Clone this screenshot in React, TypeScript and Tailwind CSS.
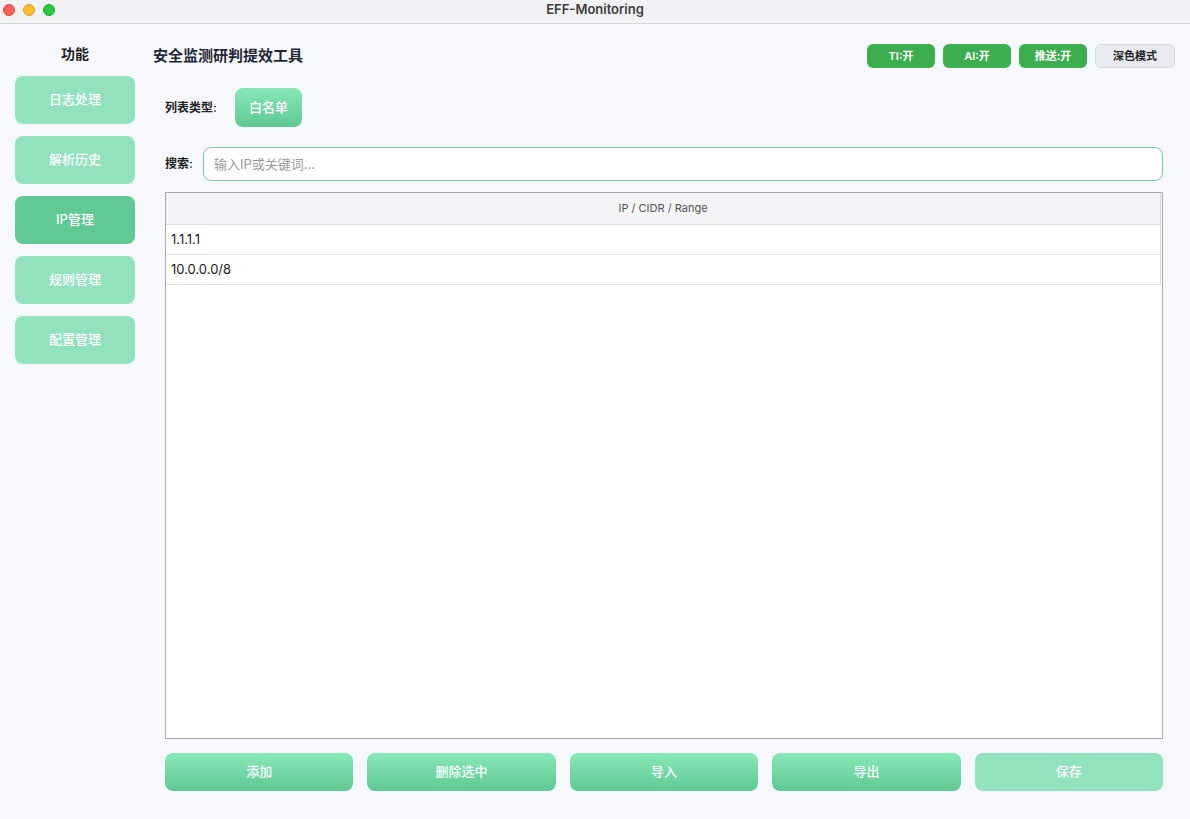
import React, { useState } from 'react';

const font = { fontFamily: '"Inter", "Noto Sans CJK SC", sans-serif' };

const navItems = ['日志处理', '解析历史', 'IP管理', '规则管理', '配置管理'];

export default function App() {
  const [active, setActive] = useState('IP管理');
  const [query, setQuery] = useState('');
  const rows = ['1.1.1.1', '10.0.0.0/8'];

  return (
    <div className="w-[1190px] h-[819px] flex flex-col bg-[#f7f8fc] overflow-hidden" style={font}>
      {/* window title bar */}
      <div className="h-[24px] shrink-0 flex items-center relative bg-[#f1f2f4] border-b border-[#d9d9d9] pb-[4px]">
        <div className="flex gap-[8px] pl-[3px]">
          <span className="w-[12px] h-[12px] rounded-full bg-[#fe5f57] border border-[#e0443e]" />
          <span className="w-[12px] h-[12px] rounded-full bg-[#febc2e] border border-[#dea123]" />
          <span className="w-[12px] h-[12px] rounded-full bg-[#28c840] border border-[#1aab29]" />
        </div>
        <div className="absolute inset-0 pb-[4px] flex items-center justify-center text-[13px] font-semibold text-[#3c3c3c]">
          EFF-Monitoring
        </div>
      </div>

      <div className="flex flex-1 min-h-0">
        {/* sidebar */}
        <div className="w-[150px] shrink-0 flex flex-col items-center pt-[20px]">
          <div className="text-[14px] font-semibold text-[#222] h-[20px] leading-[20px]">功能</div>
          <div className="flex flex-col gap-[12px] mt-[12px]">
            {navItems.map((item) => (
              <button
                key={item}
                onClick={() => setActive(item)}
                className={
                  'w-[120px] h-[48px] rounded-[8px] text-white text-[13px] font-medium ' +
                  (active === item ? 'bg-[#61c993]' : 'bg-[#92e2bd]')
                }
              >
                {item}
              </button>
            ))}
          </div>
        </div>

        {/* main */}
        <div className="flex-1 flex flex-col pr-[15px] pl-[3px] pt-[20px] pb-[28px]">
          <div className="flex items-center justify-between h-[24px]">
            <h1 className="text-[15px] font-semibold text-[#1f2937]">安全监测研判提效工具</h1>
            <div className="flex gap-[8px]">
              <button className="w-[68px] h-[24px] rounded-[6px] bg-[#3cae50] text-white text-[11px] font-semibold">TI:开</button>
              <button className="w-[68px] h-[24px] rounded-[6px] bg-[#3cae50] text-white text-[11px] font-semibold">AI:开</button>
              <button className="w-[68px] h-[24px] rounded-[6px] bg-[#3cae50] text-white text-[11px] font-semibold">推送:开</button>
              <button className="w-[80px] h-[24px] rounded-[6px] bg-[#e9eaef] border border-[#d4d7df] text-[#222] text-[11px] font-semibold">深色模式</button>
            </div>
          </div>

          <div className="flex items-center mt-[20px] pl-[12px] h-[39px]">
            <span className="text-[12px] font-semibold text-[#222] w-[70px]">列表类型:</span>
            <button className="w-[67px] h-[39px] rounded-[8px] bg-gradient-to-b from-[#88e8b8] to-[#5ec993] text-white text-[13px] font-medium">
              白名单
            </button>
          </div>

          <div className="flex items-center mt-[20px] pl-[12px] mr-[12px] h-[34px]">
            <span className="text-[12px] font-semibold text-[#222] w-[38px]">搜索:</span>
            <input
              value={query}
              onChange={(e) => setQuery(e.target.value)}
              placeholder="输入IP或关键词..."
              className="flex-1 h-[34px] rounded-[8px] border border-[#7fcaa9] bg-white px-[10px] text-[13px] text-[#333] placeholder:text-[#9a9a9a] outline-none"
            />
          </div>

          <div className="flex-1 mt-[11px] ml-[12px] mr-[12px] border border-[#a9a9a9] bg-white flex flex-col min-h-0">
            <div className="h-[32px] shrink-0 bg-[#f3f4f6] border-b border-[#e2e2e2] border-r border-r-[#d0d0d0] flex items-center justify-center text-[11px] text-[#555] mr-[1px]">
              IP / CIDR / Range
            </div>
            {rows.filter((r) => r.includes(query)).map((r) => (
              <div key={r} className="h-[30px] shrink-0 border-b border-[#e4e4e4] border-r border-r-[#d8d8d8] mr-[1px] flex items-center px-[5px] text-[13px] text-[#1a1a1a]">
                {r}
              </div>
            ))}
          </div>

          <div className="grid grid-cols-5 gap-[14px] mt-[14px] ml-[12px] mr-[12px] h-[38px]">
            {['添加', '删除选中', '导入', '导出'].map((b) => (
              <button key={b} className="h-[38px] rounded-[8px] bg-gradient-to-b from-[#88e8b8] to-[#5ec993] text-white text-[13px] font-medium">
                {b}
              </button>
            ))}
            <button className="h-[38px] rounded-[8px] bg-[#92e2bd] text-white text-[13px] font-medium">保存</button>
          </div>
        </div>
      </div>
    </div>
  );
}
